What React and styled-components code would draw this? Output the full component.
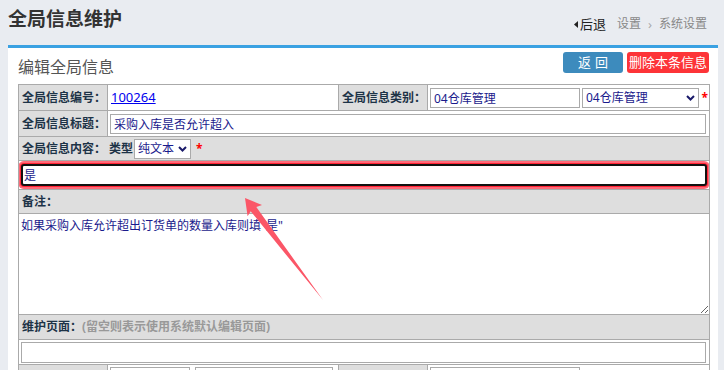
import React from 'react';
import styled, { createGlobalStyle } from 'styled-components';

const GlobalStyle = createGlobalStyle`
  body {
    margin: 0;
    background: #e9ecf1;
    font-family: "Noto Sans", "Noto Sans CJK SC", sans-serif;
    color: #333;
  }
`;

const Page = styled.div`
  position: relative;
  width: 724px;
  height: 370px;
  overflow: hidden;
`;

const Header = styled.header`
  display: flex;
  justify-content: space-between;
  align-items: flex-start;
  height: 45px;
  padding: 0 17px 0 8px;
  box-sizing: border-box;
`;

const Title = styled.h1`
  margin: 5px 0 0 0;
  font-size: 19px;
  line-height: 28px;
  font-weight: bold;
  color: #333;
`;

const Crumbs = styled.nav`
  display: flex;
  align-items: center;
  gap: 7px;
  margin-top: 15px;
  font-size: 12px;
  line-height: 18px;
  color: #888;
`;

const Back = styled.span`
  display: flex;
  align-items: center;
  gap: 2px;
  color: #222;
  font-size: 13px;
  margin-right: 4px;
`;

const Sep = styled.span`
  color: #aaa;
  font-size: 13px;
`;

const Panel = styled.section`
  margin-left: 8px;
  width: 710px;
  background: #fff;
  border-top: 3px solid #3aa1e2;
  padding: 0 9px 0 10px;
  box-sizing: border-box;
  height: 330px;
`;

const PanelHead = styled.div`
  display: flex;
  justify-content: space-between;
  align-items: flex-start;
  height: 36px;
`;

const PanelTitle = styled.h2`
  margin: 8px 0 0 0;
  font-size: 16px;
  line-height: 22px;
  font-weight: normal;
  color: #555;
`;

const Buttons = styled.div`
  display: flex;
  gap: 4px;
  margin-top: 4px;
`;

const Button = styled.button`
  height: 21px;
  padding: 0;
  width: ${({ $w }) => $w}px;
  border: 0;
  border-radius: 3px;
  background: ${({ $red }) => ($red ? '#fd3438' : '#3d8bbd')};
  color: #fff;
  font-family: inherit;
  font-size: 13px;
  line-height: 21px;
  letter-spacing: ${({ $red }) => ($red ? '0' : '4px')};
  text-indent: ${({ $red }) => ($red ? '0' : '4px')};
`;

const Table = styled.table`
  border-collapse: collapse;
  width: 691px;
  table-layout: fixed;
  font-size: 12px;
`;

const Row = styled.tr`
  height: ${({ $h }) => $h}px;
`;

const Label = styled.td`
  border: 1px solid #aaa;
  background: #dedede;
  font-weight: bold;
  color: #1d3347;
  padding: 0 0 0 3px;
  white-space: nowrap;
  line-height: 18px;
`;

const Cell = styled.td`
  border: 1px solid #aaa;
  background: #fff;
  padding: ${({ $pad }) => $pad || '0 3px 0 2px'};
  white-space: nowrap;
  line-height: 18px;
`;

const Link = styled.a`
  color: #0000ee;
  text-decoration: underline;
  font-size: 13px;
  margin-left: 1px;
`;

const Input = styled.input`
  box-sizing: border-box;
  display: block;
  width: ${({ $w }) => ($w ? `${$w}px` : '100%')};
  height: ${({ $h }) => $h || 20}px;
  border: 1px solid #aaa;
  padding: 0 3px;
  font-family: inherit;
  font-size: 12px;
  color: #1a1a8c;
  background: #fff;
  outline: none;
`;

const FocusInput = styled(Input)`
  height: 22px;
  border: 2px solid #111;
  border-radius: 3px;
  box-shadow: 0 0 0 1px #ff2436, 0 0 0 3px #ff6a78;
  padding: 0 1px;
`;

const Inline = styled.div`
  display: flex;
  align-items: center;
  gap: ${({ $gap }) => $gap || 2}px;
`;

const TypeLabel = styled.span`
  margin-left: 2px;
`;

const SelectWrap = styled.label`
  position: relative;
  display: block;
  width: ${({ $w }) => $w}px;
  height: 20px;
`;

const Select = styled.select`
  appearance: none;
  box-sizing: border-box;
  width: 100%;
  height: 100%;
  border: 1px solid #aaa;
  padding: 0 16px 0 3px;
  background: #fff;
  font-family: inherit;
  font-size: 12px;
  color: #1a1a8c;
  outline: none;
`;

const Chevron = styled.svg`
  position: absolute;
  right: 4px;
  top: 7px;
  pointer-events: none;
`;

const Star = styled.span`
  color: #f00;
  font-weight: bold;
  font-size: 12px;
  margin-left: ${({ $gap }) => $gap || 0}px;
`;

const Note = styled.textarea`
  display: block;
  box-sizing: border-box;
  width: 100%;
  height: 99px;
  border: 0;
  padding: 3px 2px;
  font-family: inherit;
  font-size: 12px;
  line-height: 16px;
  color: #1a1a8c;
  outline: none;
  resize: vertical;
`;

const Hint = styled.span`
  color: #999;
`;

const Overlay = styled.svg`
  position: absolute;
  left: 0;
  top: 0;
  pointer-events: none;
`;

const Drop = ({ w, value }) => (
  <SelectWrap $w={w}>
    <Select defaultValue={value}>
      <option>{value}</option>
    </Select>
    <Chevron width="9" height="6" viewBox="0 0 9 6">
      <path d="M1 1 L4.5 4.5 L8 1" fill="none" stroke="#1a1a6a" strokeWidth="2" />
    </Chevron>
  </SelectWrap>
);

const App = () => (
  <Page>
    <GlobalStyle />
    <Header>
      <Title>全局信息维护</Title>
      <Crumbs>
        <Back>
          <svg width="4" height="7" viewBox="0 0 4 7"><path d="M4 0 L0 3.5 L4 7 Z" fill="#222" /></svg>
          后退
        </Back>
        <span>设置</span>
        <Sep>›</Sep>
        <span>系统设置</span>
      </Crumbs>
    </Header>
    <Panel>
      <PanelHead>
        <PanelTitle>编辑全局信息</PanelTitle>
        <Buttons>
          <Button $w={60}>返回</Button>
          <Button $w={82} $red>删除本条信息</Button>
        </Buttons>
      </PanelHead>
      <Table>
        <colgroup>
          <col style={{ width: 89 }} />
          <col style={{ width: 231 }} />
          <col style={{ width: 89 }} />
          <col style={{ width: 282 }} />
        </colgroup>
        <tbody>
          <Row $h={26}>
            <Label>全局信息编号：</Label>
            <Cell><Link href="#">100264</Link></Cell>
            <Label>全局信息类别：</Label>
            <Cell $pad="0 1px 0 2px">
              <Inline>
                <Input $w={150} defaultValue="04仓库管理" />
                <Drop w={120} value="04仓库管理" />
                <Star>*</Star>
              </Inline>
            </Cell>
          </Row>
          <Row $h={26}>
            <Label>全局信息标题：</Label>
            <Cell colSpan={3}><Input defaultValue="采购入库是否允许超入" /></Cell>
          </Row>
          <Row $h={24}>
            <Label colSpan={4}>
              <Inline $gap={1}>
                <span>全局信息内容：</span>
                <TypeLabel>类型</TypeLabel>
                <Drop w={57} value="纯文本" />
                <Star $gap={4}>*</Star>
              </Inline>
            </Label>
          </Row>
          <Row $h={29}>
            <Cell colSpan={4} $pad="0 2px 0 2px">
              <FocusInput defaultValue="是" />
            </Cell>
          </Row>
          <Row $h={24}>
            <Label colSpan={4}>备注：</Label>
          </Row>
          <Row $h={101}>
            <Cell colSpan={4} $pad="0">
              <Note defaultValue={'如果采购入库允许超出订货单的数量入库则填"是"'} />
            </Cell>
          </Row>
          <Row $h={25}>
            <Label colSpan={4}>维护页面：<Hint>(留空则表示使用系统默认编辑页面)</Hint></Label>
          </Row>
          <Row $h={25}>
            <Cell colSpan={4}><Input $h={21} /></Cell>
          </Row>
          <Row $h={25}>
            <Label />
            <Cell>
              <Inline $gap={5}>
                <Input $w={80} />
                <Input $w={138} />
              </Inline>
            </Cell>
            <Label />
            <Cell><Input $w={150} /></Cell>
          </Row>
        </tbody>
      </Table>
    </Panel>
    <Overlay width="724" height="370" viewBox="0 0 724 370">
      <polygon
        points="245,198 262,205 256.3,207 323,300 250.7,211.3 247.6,216.2"
        fill="#fb5667"
      />
    </Overlay>
  </Page>
);

export default App;
